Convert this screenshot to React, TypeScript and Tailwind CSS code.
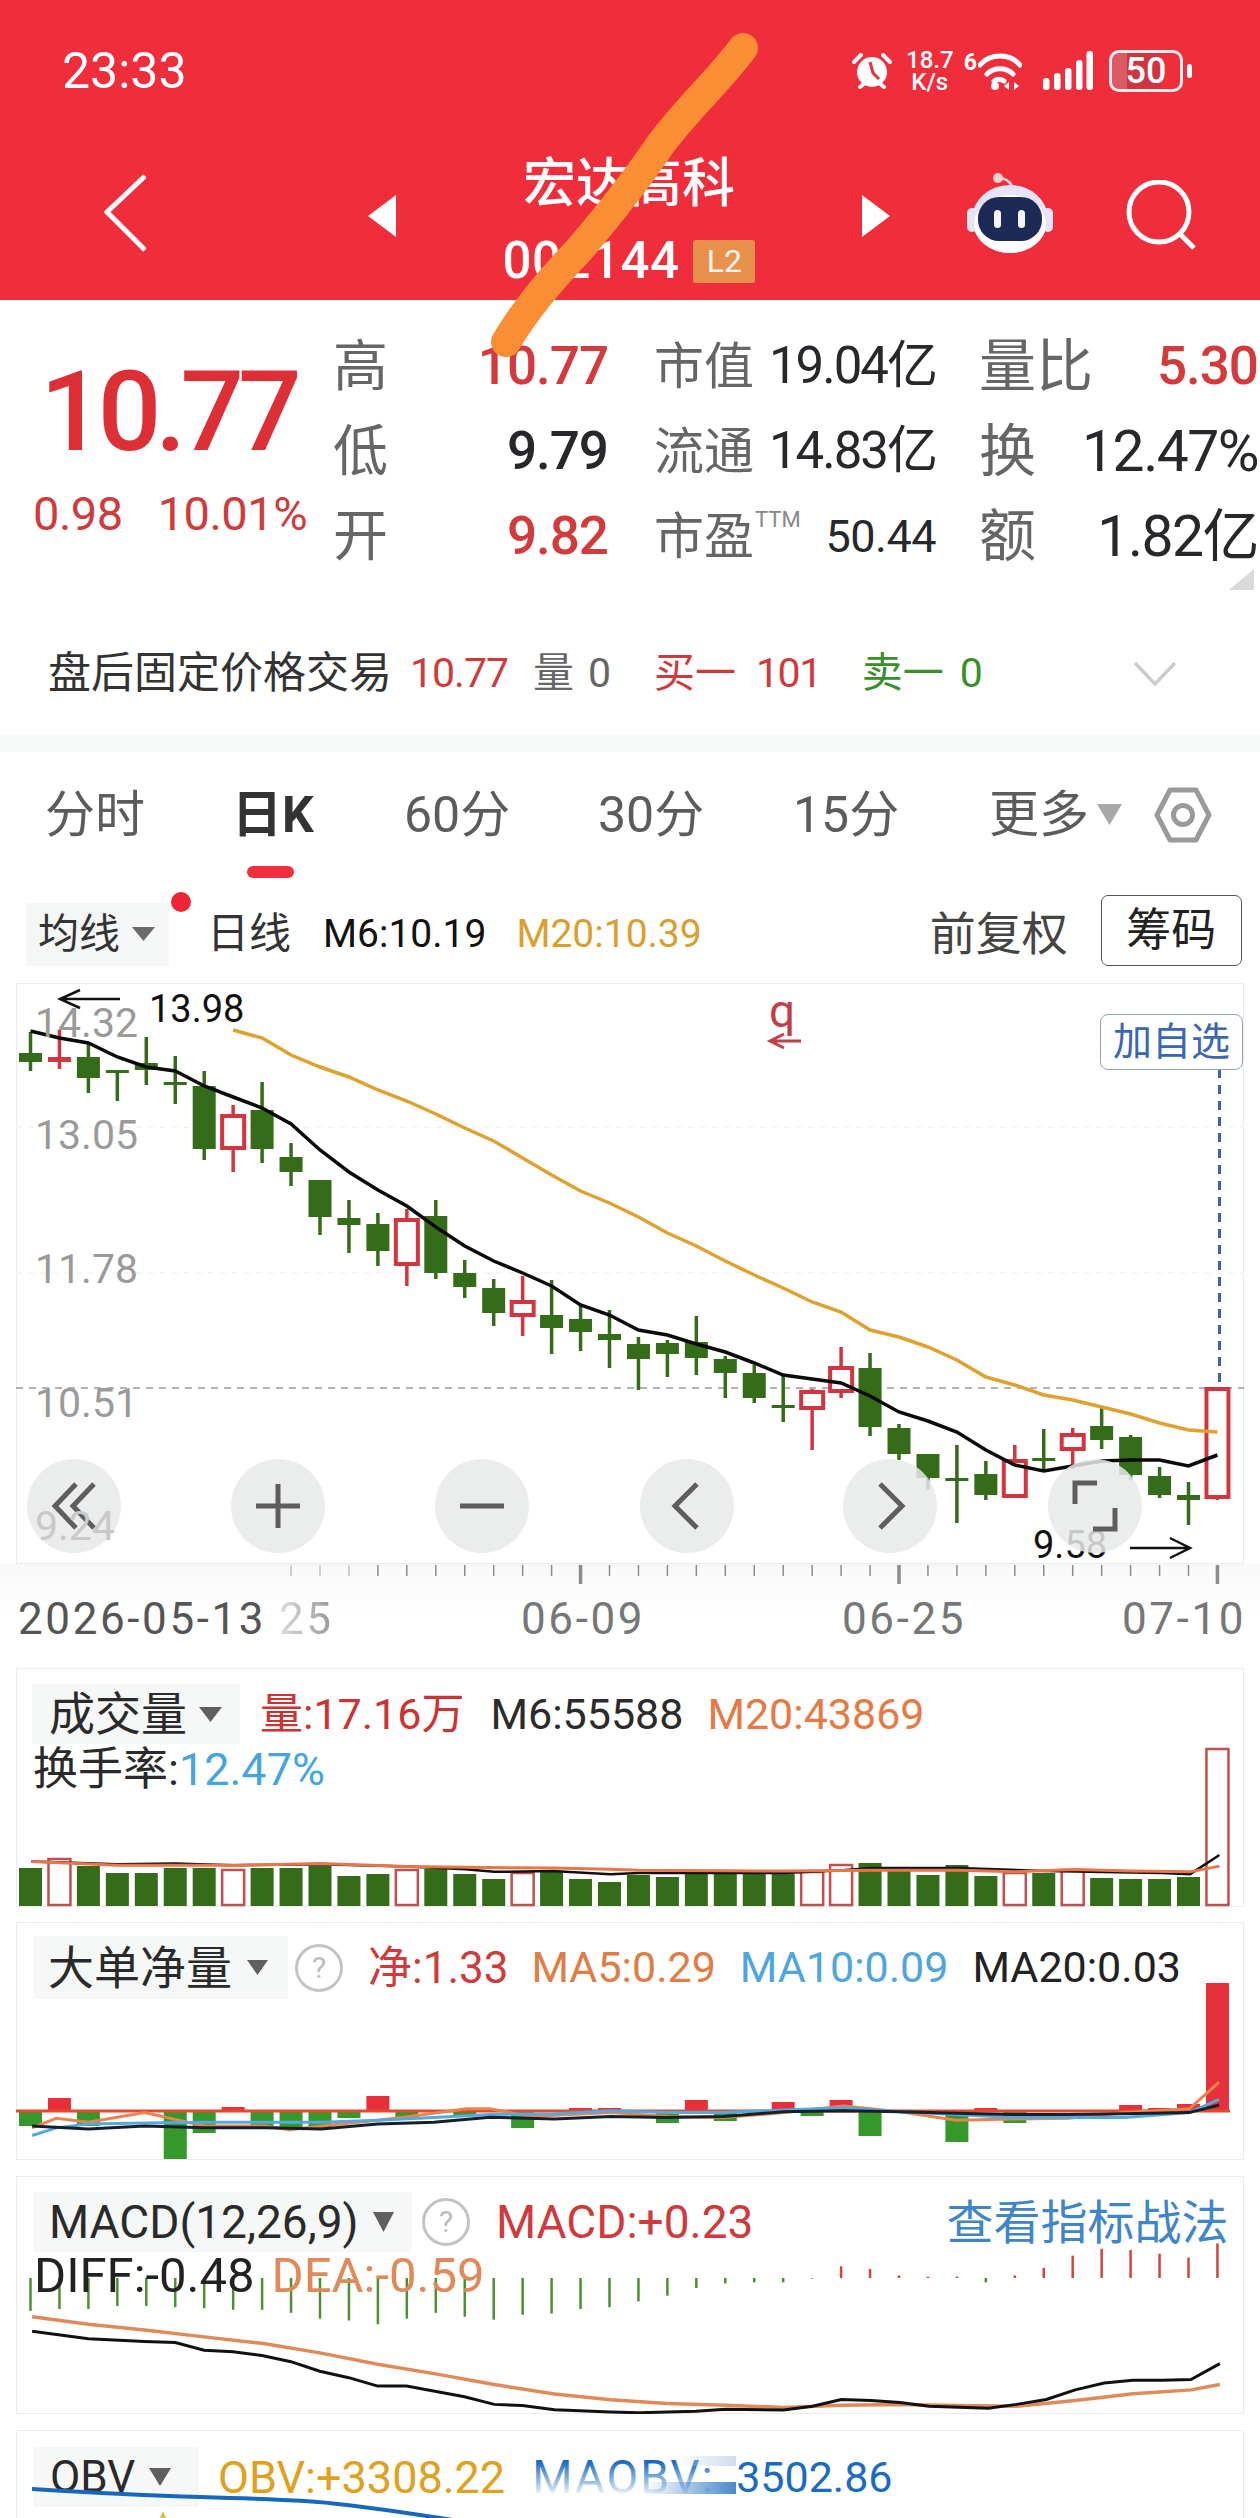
import React from "react";

const X = (i: number) => 30.5 + 28.95 * i;
type C = [number, number, number, number, number];
// kind(1 red hollow, 0 green, 2 red solid), wickTop, bodyTop, bodyBottom, wickBottom
const candles: C[] = [
  [0,1032,1053,1062,1071],[2,1030,1057,1062,1069],[0,1043,1057,1078,1093],[0,1070,1070,1073,1101],[0,1037,1063,1070,1085],
  [0,1056,1082,1085,1104],[0,1071,1086,1149,1160],[1,1105,1116,1148,1172],[0,1082,1110,1149,1163],[0,1143,1157,1172,1186],
  [0,1180,1180,1217,1235],[0,1200,1218,1225,1253],[0,1213,1224,1251,1266],[1,1209,1220,1264,1286],[0,1200,1216,1273,1279],
  [0,1260,1273,1287,1298],[0,1279,1288,1313,1326],[1,1276,1302,1315,1336],[0,1280,1315,1328,1354],[0,1305,1319,1332,1351],
  [0,1310,1334,1340,1368],[0,1337,1344,1359,1390],[0,1340,1343,1354,1377],[0,1316,1342,1358,1375],[0,1356,1359,1373,1398],
  [0,1365,1373,1398,1403],[0,1375,1405,1407,1422],[1,1389,1392,1408,1450],[1,1347,1368,1391,1398],[0,1353,1368,1427,1436],
  [0,1424,1428,1454,1460],[0,1454,1454,1478,1490],[0,1445,1478,1481,1523],[0,1461,1474,1495,1500],[1,1445,1461,1496,1497],
  [0,1429,1458,1461,1469],[1,1428,1435,1449,1469],[0,1408,1426,1440,1449],[0,1435,1437,1475,1480],[0,1467,1476,1495,1498],
  [0,1482,1495,1500,1525],[1,1388,1389,1497,1500],
];
const ma6 = [1031,1038,1043,1057,1067,1071,1086,1097,1108,1124,1150,1172,1190,1206,1227,1246,1261,1273,1286,1305,1315,1330,1335,1344,1352,1363,1375,1379,1383,1396,1412,1421,1432,1450,1465,1471,1466,1461,1460,1460,1466,1455];
const ma20 = [1030,1038,1055,1067,1077,1090,1101,1114,1128,1141,1158,1175,1191,1203,1217,1233,1246,1261,1275,1288,1302,1312,1330,1337,1347,1360,1377,1385,1395,1400,1407,1414,1423,1430,1432];
const vol = [1868,1859,1866,1873,1873,1868,1868,1870,1868,1868,1866,1876,1874,1870,1869,1874,1879,1873,1871,1879,1882,1875,1877,1874,1874,1874,1874,1872,1865,1863,1869,1875,1865,1876,1873,1873,1870,1878,1879,1879,1877,1749];
const line = (p: number[][]) => p.map((q) => q.join(",")).join(" ");
const series = (a: number[], start = 0) => line(a.map((y, i) => [X(i + start), y]));
const z4 = (x: number, y: number) => [x * 0.4018, 1320 + y * 0.3827];
const z5 = (x: number, y: number) => [630 + x * 0.4018, 1320 + y * 0.3827];
const volBlack = [...[[78,1415],[180,1418],[292,1422],[436,1420],[581,1425],[797,1422],[1014,1428],[1158,1435],[1230,1442],[1374,1440],[1519,1448]].map(([a,b])=>z4(a,b)), ...[[22,1445],[384,1445],[528,1438],[601,1432],[817,1432],[1034,1440],[1322,1445],[1394,1448],[1467,1398]].map(([a,b])=>z5(a,b))];
const volOrange = [...[[78,1415],[292,1425],[581,1425],[797,1420],[1014,1428],[1158,1430],[1374,1432],[1519,1435]].map(([a,b])=>z4(a,b)), ...[[22,1438],[384,1440],[601,1438],[817,1438],[961,1442],[1106,1436],[1250,1440],[1394,1442],[1467,1427]].map(([a,b])=>z5(a,b))];
const z6 = (p: number[][]) => line(p.map(([a, b]) => [a * 0.8036, 1920 + b * 0.3814]));
const netBars: [number, number][] = [[0,2126],[1,2098],[2,2126],[5,2159],[6,2133],[7,2107],[8,2128],[9,2128],[10,2128],[11,2118],[12,2096],[13,2118],[15,2116],[17,2128],[19,2108],[20,2108],[22,2123],[23,2100],[24,2121],[26,2102],[27,2116],[28,2100],[29,2136],[32,2142],[33,2108],[34,2123],[38,2105],[39,2108],[40,2104],[41,1983]];
const macdBars = [1025,1020,1020,1012,1012,1015,1018,1022,1022,1030,1045,1050,1060,1045,1030,1040,1048,1035,1032,1020,1015,1000,985,965,953,950,950,940,908,915,932,935,935,950,932,912,880,862,865,875,885,848];

const Tri = ({ cls }: { cls: string }) => (
  <svg viewBox="0 0 24 16" className={cls} preserveAspectRatio="none"><path d="M0 0H24L12 16Z" fill="currentColor" /></svg>
);
const Help = () => (
  <div className="flex h-[48px] w-[48px] shrink-0 items-center justify-center rounded-full border-[3px] border-[#c4c4c4] text-[30px] text-[#bdbdbd]">?</div>
);
const Circle = ({ cls, children }: { cls: string; children: React.ReactNode }) => (
  <div className={"absolute top-[475px] flex h-[94px] w-[94px] items-center justify-center rounded-full bg-[#e8e9e9]/85 " + cls}>
    <svg width="60" height="60" viewBox="0 0 60 60" fill="none" stroke="#5e5e5e" strokeWidth="5">{children}</svg>
  </div>
);
const StatRow = ({ label, children }: { label: React.ReactNode; children: React.ReactNode }) => (
  <div className="flex h-[85px] items-center justify-between">
    <span className="text-[#666] leading-none">{label}</span>
    {children}
  </div>
);

export default function App() {
  return (
    <div className="relative flex h-[2518px] w-[1260px] flex-col overflow-hidden bg-white font-['Roboto','Noto_Sans_CJK_SC',sans-serif]">
      {/* Header */}
      <header className="h-[300px] shrink-0 bg-[#f02e3b] text-white">
        <div className="flex h-[142px] items-center justify-between pl-[62px] pr-[68px]">
          <span className="text-[50px] leading-none">23:33</span>
          <div className="flex items-center">
            <svg width="42" height="40" viewBox="0 0 42 40" fill="none">
              <circle cx="21" cy="21" r="15" fill="#fff" />
              <path d="M19 11l3 11 6 6" stroke="#f02e3b" strokeWidth="3" />
              <path d="M3 11l7-7M39 11l-7-7M9 36l5-4M33 36l-5-4" stroke="#fff" strokeWidth="4" strokeLinecap="round" />
            </svg>
            <div className="ml-[12px] flex w-[50px] flex-col items-center text-[20px] font-medium leading-[24px]"><span className="text-[24px] leading-[22px]">18.7</span><span className="text-[24px] leading-[22px]">K/s</span></div>
            <span className="mb-[18px] ml-[9px] text-[23px] font-bold leading-none">6</span>
            <svg width="44" height="40" viewBox="0 0 44 40" fill="none" stroke="#fff" strokeWidth="5" strokeLinecap="round" className="ml-[1px]">
              <path d="M2 14C12 2 32 2 42 14M9 23c7-7 19-7 26 0M16 30c3-2 7-2 10 0" />
              <circle cx="17" cy="35" r="4" fill="#fff" stroke="none" />
              <path d="M31 31v8l-5-4ZM36 31v8l5-4Z" fill="#fff" stroke="none" />
            </svg>
            <svg width="50" height="40" viewBox="0 0 50 40" fill="#fff" className="ml-[21px]">
              <rect x="0" y="27" width="6.5" height="12" rx="3" /><rect x="11" y="22" width="6.5" height="17" rx="3" /><rect x="22" y="17" width="6.5" height="22" rx="3" /><rect x="33" y="9" width="6.5" height="30" rx="3" /><rect x="43.5" y="0" width="6.5" height="39" rx="3" />
            </svg>
            <div className="ml-[16px] flex h-[42px] w-[74px] items-center justify-center rounded-[10px] border-[3px] border-white/90 bg-[linear-gradient(90deg,#dc5a63_0_22%,#cf3441_22%_72%,transparent_72%)] text-[36px] font-medium leading-none">50</div>
            <div className="ml-[4px] h-[14px] w-[5px] rounded-full bg-white" />
          </div>
        </div>
        <div className="flex h-[158px] items-start pl-[104px]">
          <svg width="42" height="78" viewBox="0 0 42 78" fill="none" stroke="#fff" strokeWidth="5" className="mt-[32px]"><path d="M41 2 3 38l38 38" /></svg>
          <svg width="28" height="42" viewBox="0 0 28 42" className="ml-[222px] mt-[53px]"><path d="M28 0V42L0 21Z" fill="#fff" /></svg>
          <div className="flex w-[466px] flex-col items-center">
            <div className="mt-[12px] h-[60px] text-[53px] font-medium leading-[60px]">宏达高科</div>
            <div className="mt-[21px] flex items-center">
              <span className="text-[51px] font-medium leading-[52px] tracking-[0.5px]">002144</span>
              <span className="ml-[14px] flex h-[43px] w-[62px] items-center justify-center rounded-[3px] bg-[#e8914c] text-[32px] leading-none text-white/90">L2</span>
            </div>
          </div>
          <svg width="28" height="42" viewBox="0 0 28 42" className="mt-[53px]"><path d="M0 0V42L28 21Z" fill="#fff" /></svg>
          <svg width="88" height="82" viewBox="0 0 88 82" className="ml-[77px] mt-[30px]">
            <path d="M31 6q10 0 14 8" stroke="#f8dcdc" strokeWidth="2.5" fill="none" />
            <circle cx="31" cy="6" r="5" fill="#f9cfc9" />
            <rect x="0" y="36" width="10" height="24" rx="5" fill="#e4e6f7" />
            <rect x="76" y="36" width="10" height="24" rx="5" fill="#e4e6f7" />
            <ellipse cx="43" cy="47" rx="38" ry="34" fill="#e6e4fa" />
            <ellipse cx="43" cy="52" rx="36" ry="29" fill="#fff" />
            <rect x="11" y="25" width="64" height="44" rx="21" fill="#1d2a55" />
            <rect x="27" y="38" width="7" height="18" rx="3.5" fill="#f4f6ff" />
            <rect x="51" y="38" width="7" height="18" rx="3.5" fill="#f4f6ff" />
          </svg>
          <svg width="72" height="72" viewBox="0 0 72 72" fill="none" stroke="#fff" strokeWidth="5" className="ml-[71px] mt-[38px]"><circle cx="33" cy="32" r="30" /><path d="M54 54 68 68" /></svg>
        </div>
      </header>

      {/* Quote stats */}
      <section className="relative flex h-[320px] shrink-0 pt-[24px] text-[#222]">
        <div className="w-[333px] shrink-0 pl-[40px]">
          <div className="mt-[38px] h-[100px] text-[112px] font-medium leading-[100px] tracking-[-6px] text-[#dc2f36]">10.77</div>
          <div className="ml-[-7px] mt-[27px] flex text-[#cf3a3c] text-[47px] leading-[50px]">
            <span className="tracking-[-0.5px]">0.98</span><span className="ml-[35px] tracking-[-0.5px]">10.01%</span>
          </div>
        </div>
        <div className="w-[275px] shrink-0 text-[55px]">
          <StatRow label="高"><span className="text-[53px] font-medium tracking-[-1px] text-[#d23a3c]">10.77</span></StatRow>
          <StatRow label="低"><span className="text-[53px] font-medium tracking-[-1px] text-[#26282c]">9.79</span></StatRow>
          <StatRow label="开"><span className="text-[53px] font-medium tracking-[-1px] text-[#d23a3c]">9.82</span></StatRow>
        </div>
        <div className="ml-[46px] w-[282px] shrink-0 text-[50px]">
          <StatRow label="市值"><span className="text-[51px] tracking-[-2px] text-[#26282c]">19.04亿</span></StatRow>
          <StatRow label="流通"><span className="text-[51px] tracking-[-2px] text-[#26282c]">14.83亿</span></StatRow>
          <StatRow label={<>市盈<sup className="ml-[1px] align-[16px] text-[22px] text-[#888]">TTM</sup></>}><span className="text-[45px] tracking-[-0.5px] text-[#26282c]">50.44</span></StatRow>
        </div>
        <div className="ml-[43px] w-[279px] shrink-0 text-[57px]">
          <StatRow label="量比"><span className="text-[53px] font-medium tracking-[-1px] text-[#d23a3c]">5.30</span></StatRow>
          <StatRow label="换"><span className="text-[57px] tracking-[-1.5px] text-[#26282c]">12.47%</span></StatRow>
          <StatRow label="额"><span className="text-[57px] tracking-[-1.5px] text-[#26282c]">1.82亿</span></StatRow>
        </div>
        <svg width="25" height="21" viewBox="0 0 25 21" className="absolute right-[6px] top-[269px]"><path d="M25 0V21H0Z" fill="#d8dadc" /></svg>
      </section>

      {/* After-hours row */}
      <section className="flex h-[115px] shrink-0 items-center pb-[8px] pl-[48px] text-[41px] leading-none">
        <span className="w-[340px] whitespace-nowrap text-[43px] text-[#333]">盘后固定价格交易</span>
        <span className="ml-[22px] w-[90px] tracking-[-1px] text-[#cf3a3c]">10.77</span>
        <span className="ml-[33px] text-[#666]">量</span>
        <span className="ml-[14px] text-[#666]">0</span>
        <span className="ml-[43px] text-[#cf3a3c]">买一</span>
        <span className="ml-[20px] tracking-[-1.5px] text-[#cf3a3c]">101</span>
        <span className="ml-[41px] text-[#3a8f2b]">卖一</span>
        <span className="ml-[16px] text-[#3a8f2b]">0</span>
        <svg width="42" height="24" viewBox="0 0 42 24" fill="none" stroke="#c9cccf" strokeWidth="3.5" className="ml-[151px]"><path d="M1 1 21 22 41 1" /></svg>
      </section>
      <div className="h-[17px] shrink-0 bg-[#f8f9f9]" />

      {/* Tabs */}
      <nav className="flex h-[133px] shrink-0 items-start pl-[45px] pt-[35px] text-[50px] leading-[56px] text-[#5c5c5c]">
        <span className="w-[96px] whitespace-nowrap">分时</span>
        <div className="ml-[91px] flex w-[80px] flex-col">
          <span className="whitespace-nowrap font-bold text-[#333]">日K</span>
          <div className="ml-[15px] mt-[23px] h-[12px] w-[47px] rounded-full bg-[#ef2f3c]" />
        </div>
        <span className="ml-[92px] w-[104px] whitespace-nowrap">60分</span>
        <span className="ml-[90px] w-[104px] whitespace-nowrap">30分</span>
        <span className="ml-[91px] w-[104px] whitespace-nowrap">15分</span>
        <span className="ml-[92px] w-[96px] whitespace-nowrap">更多</span>
        <Tri cls="ml-[12px] mt-[17px] h-[21px] w-[25px] text-[#a9a9a9]" />
        <svg width="58" height="56" viewBox="0 0 58 56" fill="none" stroke="#9a9a9a" strokeWidth="5" className="ml-[32px]">
          <path d="M16 3H42L55 28 42 53H16L3 28Z" strokeLinejoin="round" /><circle cx="29" cy="28" r="9.5" />
        </svg>
      </nav>

      {/* Toolbar */}
      <section className="relative flex h-[98px] shrink-0 items-center pl-[26px] text-[41px] leading-none">
        <div className="flex h-[63px] w-[143px] items-center bg-[#f5f6f6] pl-[12px] text-[#333]">
          <span>均线</span>
          <Tri cls="ml-[12px] h-[14px] w-[23px] text-[#6a6a6a]" />
        </div>
        <div className="absolute left-[171px] top-[7px] h-[20px] w-[20px] rounded-full bg-[#ef2535]" />
        <span className="ml-[38px] whitespace-nowrap text-[42px] text-[#333]">日线</span>
        <span className="ml-[32px] whitespace-nowrap text-[39px] text-[#111]">M6:10.19</span>
        <span className="ml-[30px] whitespace-nowrap text-[39px] text-[#d9a030]">M20:10.39</span>
        <span className="ml-[228px] whitespace-nowrap text-[46px] text-[#444]">前复权</span>
        <div className="ml-[33px] mb-[8px] flex h-[71px] w-[141px] items-center justify-center rounded-[7px] border border-[#555] text-[45px] text-[#222]">筹码</div>
      </section>

      {/* Candlestick chart */}
      <section className="relative ml-[16px] h-[581px] w-[1228px] shrink-0 border border-[#ececec]">
        <svg className="absolute left-[-1px] top-[-1px]" width="1228" height="581" viewBox="16 983 1228 581">
          {[1127, 1273].map((y) => <line key={y} x1="16" x2="1244" y1={y} y2={y} stroke="#f4f4f4" strokeDasharray="6 6" strokeWidth="1.5" />)}
          <line x1="16" x2="1244" y1="1388" y2="1388" stroke="#9a9a9a" strokeDasharray="7 6" strokeWidth="1.5" />
          <line x1="1219.5" x2="1219.5" y1="1069" y2="1388" stroke="#3f5fa6" strokeDasharray="9 7" strokeWidth="3" />
          {candles.map(([k, wt, bt, bb, wb], i) => {
            const col = k === 0 ? "#346c19" : "#d2353f";
            const x = X(i);
            return (
              <g key={i}>
                <line x1={x} x2={x} y1={wt} y2={k === 1 ? bt : wb} stroke={col} strokeWidth="3.5" />
                {k === 1 && <line x1={x} x2={x} y1={bb} y2={wb} stroke={col} strokeWidth="3.5" />}
                {k === 1 ? (
                  <rect x={x - 11} y={bt} width="22" height={bb - bt} fill="#fff" stroke={col} strokeWidth="4" />
                ) : (
                  <rect x={x - 11.5} y={bt} width="23" height={Math.max(bb - bt, 3)} fill={col} />
                )}
              </g>
            );
          })}
          <polyline points={series(ma20, 7)} fill="none" stroke="#dfa12f" strokeWidth="3.5" />
          <polyline points={series(ma6)} fill="none" stroke="#0a0a0a" strokeWidth="3.5" />
          <path d="M120 999H60M80 990 60 999 80 1008" fill="none" stroke="#111" strokeWidth="2.5" />
          <path d="M1130 1548H1190M1170 1538 1190 1548 1170 1558" fill="none" stroke="#111" strokeWidth="2.5" />
          <path d="M801 1041H772M784 1034 770 1041 784 1048" fill="none" stroke="#c23f49" strokeWidth="3" />
        </svg>
        <span className="absolute left-[18px] top-[12px] text-[41px] leading-[54px] text-[#9a9a9a]">14.32</span>
        <span className="absolute left-[132px] top-[-2px] text-[38px] leading-[54px] text-[#111]">13.98</span>
        <span className="absolute left-[18px] top-[124px] text-[41px] leading-[54px] text-[#9a9a9a]">13.05</span>
        <span className="absolute left-[18px] top-[258px] text-[41px] leading-[54px] text-[#9a9a9a]">11.78</span>
        <span className="absolute left-[18px] top-[392px] text-[41px] leading-[54px] text-[#9a9a9a]">10.51</span>
        <span className="absolute left-[1016px] top-[534px] text-[38px] leading-[54px] text-[#111]">9.58</span>
        <span className="absolute left-[752px] top-[4px] text-[46px] leading-[46px] text-[#c23f49]">q</span>
        <div className="absolute left-[1083px] top-[30px] flex h-[56px] w-[143px] items-center justify-center rounded-[8px] border border-[#8ea0bd] bg-white text-[39px] leading-none text-[#3a66b5]">加自选</div>
        <Circle cls="left-[10px]"><path d="M32 8 11 30l21 22M50 8 29 30l21 22" /></Circle>
        <Circle cls="left-[214px]"><path d="M8 30H52M30 8V52" /></Circle>
        <Circle cls="left-[418px]"><path d="M8 30H52" /></Circle>
        <Circle cls="left-[623px]"><path d="M40 8 18 30l22 22" /></Circle>
        <Circle cls="left-[826px]"><path d="M20 8 42 30 20 52" /></Circle>
        <Circle cls="left-[1031px]"><path d="M32 7H10V28M28 53H50V32" /></Circle>
        <span className="absolute left-[18px] top-[515px] text-[41px] leading-[54px] text-[#c9c9c9]">9.24</span>
      </section>

      {/* Date axis */}
      <section className="relative h-[104px] shrink-0 bg-gradient-to-b from-[#f7f8f8] via-white to-white text-[44px] leading-none tracking-[2.6px]">
        <svg className="absolute left-0 top-0" width="1260" height="24" viewBox="0 1564 1260 24">
          {Array.from({ length: 33 }, (_, k) => k + 9).map((i) => {
            const major = i === 19 || i === 30 || i === 41;
            return <line key={i} x1={X(i)} x2={X(i)} y1="1565" y2={major ? 1584 : 1576} stroke="#8d8d8d" strokeOpacity={i < 12 ? 0.5 : 1} strokeWidth={major ? 3.5 : 1.5} />;
          })}
        </svg>
        <div className="flex pl-[18px] pt-[33px] text-[#777]">
          <span className="w-[245px] whitespace-nowrap text-[#555]">2026-05-13</span>
          <span className="ml-[16px] w-[54px] whitespace-nowrap bg-gradient-to-r from-[#ddd] to-[#999] bg-clip-text text-transparent">25</span>
          <span className="ml-[188px] w-[121px] whitespace-nowrap">06-09</span>
          <span className="ml-[200px] w-[120px] whitespace-nowrap">06-25</span>
          <span className="ml-[160px] w-[120px] whitespace-nowrap">07-10</span>
        </div>
      </section>

      {/* Volume */}
      <section className="relative ml-[16px] h-[239px] w-[1228px] shrink-0 border border-[#ececec] text-[43px] leading-none">
        <svg className="absolute left-[-1px] top-[-1px]" width="1228" height="239" viewBox="16 1668 1228 239">
          {vol.map((y, i) => {
            const red = candles[i][0] !== 0;
            return red ? (
              <rect key={i} x={X(i) - 11} y={y} width="22" height={1905 - y} fill="#fff" stroke="#c0504f" strokeWidth="2.5" />
            ) : (
              <rect key={i} x={X(i) - 11.5} y={y} width="23" height={1906 - y} fill="#346c19" />
            );
          })}
          <polyline points={line(volBlack)} fill="none" stroke="#111" strokeWidth="2.5" />
          <polyline points={line(volOrange)} fill="none" stroke="#e8764a" strokeWidth="3" />
        </svg>
        <div className="relative flex items-center pl-[15px] pt-[15px]">
          <div className="flex h-[60px] w-[208px] items-center bg-[#f6f7f7] pl-[17px] text-[46px] text-[#2a2a2a]">
            <span>成交量</span>
            <Tri cls="ml-[12px] h-[15px] w-[23px] text-[#5f5f5f]" />
          </div>
          <span className="ml-[20px] whitespace-nowrap text-[#cc3333]">量:17.16万</span>
          <span className="ml-[26px] whitespace-nowrap text-[#2b2b2b]">M6:55588</span>
          <span className="ml-[24px] whitespace-nowrap text-[#e57a45]">M20:43869</span>
        </div>
        <div className="relative ml-[16px] mt-[3px] text-[45px] text-[#2a2a2a]">换手率:<span className="text-[#45a5dc]">12.47%</span></div>
      </section>
      <div className="h-[15px] shrink-0" />

      {/* Net large orders */}
      <section className="relative ml-[16px] h-[238px] w-[1228px] shrink-0 border border-[#ececec] text-[43px] leading-none">
        <svg className="absolute left-[-1px] top-[-1px]" width="1228" height="238" viewBox="16 1922 1228 238">
          {netBars.map(([i, y]) => (
            <rect key={i} x={X(i) - 11.5} y={Math.min(y, 2110)} width="23" height={Math.abs(y - 2110)} fill={y < 2110 ? "#e8303a" : "#35982a"} />
          ))}
          <line x1="16" x2="1230" y1="2111" y2="2111" stroke="#e2492f" strokeWidth="3" />
          <polyline points={z6([[40,545],[70,520],[110,530],[180,505],[254,540],[330,540],[360,550],[400,540],[470,525],[510,515],[580,495],[610,495],[660,515],[760,505],[830,515],[900,518],[975,505],[1050,488],[1120,503],[1190,525],[1260,522],[1330,520],[1400,505],[1480,495],[1517,425]])} fill="none" stroke="#e8844f" strokeWidth="3" />
          <polyline points={z6([[40,565],[70,545],[110,535],[180,532],[254,530],[330,530],[400,530],[470,525],[540,518],[610,510],[690,508],[760,500],[830,505],[900,505],[975,498],[1050,492],[1120,503],[1190,510],[1260,518],[1330,518],[1400,518],[1480,505],[1517,470]])} fill="none" stroke="#55a9dd" strokeWidth="3" />
          <polyline points={z6([[40,540],[110,548],[180,540],[254,545],[330,545],[400,548],[470,535],[540,530],[610,517],[690,522],[760,515],[830,518],[900,515],[975,503],[1050,500],[1120,503],[1190,507],[1260,510],[1330,510],[1400,508],[1480,505],[1517,485]])} fill="none" stroke="#16202b" strokeWidth="3" />
        </svg>
        <div className="relative flex items-center pl-[17px] pt-[13px]">
          <div className="flex h-[63px] w-[254px] items-center bg-[#f6f7f7] pl-[14px] text-[46px] text-[#2a2a2a]">
            <span className="whitespace-nowrap">大单净量</span>
            <Tri cls="ml-[15px] h-[15px] w-[21px] text-[#5f5f5f]" />
          </div>
          <div className="ml-[7px]"><Help /></div>
          <span className="ml-[25px] whitespace-nowrap text-[44px] text-[#cf3a3c]">净:1.33</span>
          <span className="ml-[23px] whitespace-nowrap text-[#e07c45]">MA5:0.29</span>
          <span className="ml-[24px] whitespace-nowrap text-[#4ea6dc]">MA10:0.09</span>
          <span className="ml-[24px] whitespace-nowrap text-[#222]">MA20:0.03</span>
        </div>
      </section>
      <div className="h-[16px] shrink-0" />

      {/* MACD */}
      <section className="relative ml-[16px] h-[238px] w-[1228px] shrink-0 border border-[#ececec] text-[46px] leading-none">
        <svg className="absolute left-[-1px] top-[-1px]" width="1228" height="238" viewBox="16 2176 1228 238">
          {macdBars.map((z, i) => {
            const y = 1920 + z * 0.3814;
            const red = z < 940 || (i >= 28 && z < 945);
            return <line key={i} x1={X(i)} x2={X(i)} y1={red ? y : 2278} y2={red ? 2278 : y} stroke={red ? "#d2453f" : "#4f8f34"} strokeWidth="2.5" />;
          })}
          <polyline points={z6([[40,1040],[110,1060],[180,1075],[254,1093],[326,1110],[398,1135],[470,1165],[542,1190],[615,1218],[690,1243],[760,1258],[830,1268],[903,1272],[975,1278],[1047,1272],[1120,1270],[1192,1273],[1265,1275],[1338,1260],[1410,1242],[1482,1232],[1518,1218]])} fill="none" stroke="#e08a5a" strokeWidth="3.5" />
          <polyline points={z6([[40,1078],[110,1098],[180,1105],[218,1108],[254,1128],[290,1132],[326,1142],[362,1158],[398,1183],[434,1200],[470,1222],[506,1222],[578,1250],[615,1270],[650,1273],[690,1284],[760,1290],[795,1292],[866,1288],[903,1283],[975,1285],[1011,1275],[1047,1257],[1084,1260],[1120,1265],[1156,1275],[1230,1280],[1265,1270],[1302,1257],[1338,1232],[1374,1214],[1410,1207],[1446,1207],[1482,1205],[1518,1163]])} fill="none" stroke="#111" strokeWidth="3" />
        </svg>
        <div className="relative flex items-center pl-[17px] pt-[15px]">
          <div className="flex h-[60px] w-[378px] items-center bg-[#f6f7f7] pl-[15px] text-[46px] text-[#2a2a2a]">
            <span className="whitespace-nowrap">MACD(12,26,9)</span>
            <Tri cls="ml-[14px] h-[20px] w-[21px] text-[#5f5f5f]" />
          </div>
          <div className="ml-[10px]"><Help /></div>
          <span className="ml-[26px] whitespace-nowrap text-[#cf3a3c]">MACD:+0.23</span>
          <span className="ml-[193px] whitespace-nowrap text-[47px] text-[#3f85c8]">查看指标战法</span>
        </div>
        <div className="relative ml-[17px] mt-[-1px] flex whitespace-nowrap text-[49px]">
          <span className="text-[#222]">DIFF:-0.48</span>
          <span className="ml-[17px] text-[#e08a5a]">DEA:-0.59</span>
        </div>
      </section>
      <div className="h-[16px] shrink-0" />

      {/* OBV */}
      <section className="relative ml-[16px] w-[1228px] flex-1 border border-b-0 border-[#ececec] text-[45px] leading-none">
        <svg className="absolute left-[-1px] top-[-1px]" width="1228" height="88" viewBox="16 2430 1228 88">
          <path d="M160 2518l3-7 3 7" fill="#e3b93a" />
        </svg>
        <div className="relative flex items-center pl-[17px] pt-[16px]">
          <div className="flex h-[60px] w-[164px] items-center bg-[#f6f7f7] pl-[16px] text-[44px] text-[#2a2a2a]">
            <span>OBV</span>
            <Tri cls="ml-[14px] h-[18px] w-[22px] text-[#5f5f5f]" />
          </div>
          <span className="ml-[20px] whitespace-nowrap text-[#e0a020]">OBV:+3308.22</span>
          <div className="relative ml-[27px] h-[50px] w-[204px] whitespace-nowrap text-[#1a6cc0]">
            <span className="text-[46px] leading-[50px] tracking-[2px]">MAOBV:</span>
            <div className="absolute inset-0 bg-gradient-to-b from-transparent from-20% to-white to-90%" />
            <div className="absolute bottom-[8px] right-0 h-[12px] w-[90px] bg-gradient-to-r from-transparent to-[#1a6cc0]/80" />
            <div className="absolute right-0 top-[4px] h-[10px] w-[60px] bg-gradient-to-r from-transparent to-[#cfdcec]" />
          </div>
          <span className="whitespace-nowrap text-[43px] text-[#1a6cc0]">3502.86</span>
        </div>
        <svg className="absolute left-[-1px] top-[-1px]" width="1228" height="88" viewBox="16 2430 1228 88">
          <path d="M32 2489Q130 2495 200 2497T305 2501 420 2515 445 2520" fill="none" stroke="#1768bd" strokeWidth="4" />
        </svg>
      </section>

      {/* Hand-drawn stroke across the title */}
      <svg className="absolute left-0 top-0" width="1260" height="400" viewBox="0 0 1260 400">
        <path d="M743 48C715 85 690 105 660 145 630 190 600 225 579 250 550 280 525 310 506 342" fill="none" stroke="#f98e35" strokeWidth="30" strokeLinecap="round" />
      </svg>
    </div>
  );
}
